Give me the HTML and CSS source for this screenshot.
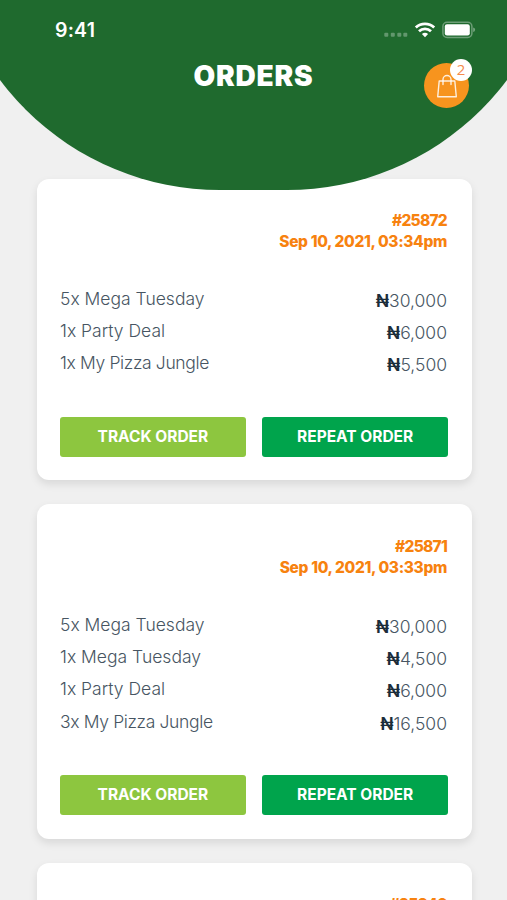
FILE: index.html
```html
<!DOCTYPE html>
<html lang="en">
<head>
<meta charset="utf-8">
<title>Orders</title>
<link rel="stylesheet" href="styles.css">
</head>
<body>
<header class="header">
  <div class="status">
    <span class="time">9:41</span>
    <svg class="status-icons" width="92" height="20" viewBox="0 0 92 20">
      <g fill="#fff" fill-opacity=".3"><rect x="0.3" y="12.8" width="4" height="4" rx="1"/><rect x="6.8" y="12.8" width="4" height="4" rx="1"/><rect x="13.3" y="12.8" width="4" height="4" rx="1"/><rect x="19.3" y="12.8" width="4" height="4" rx="1"/></g>
      <g fill="none" stroke="#fff" stroke-width="2.8"><path d="M31.8 7.4a13.5 13.5 0 0 1 18.4 0"/><path d="M35 11.3a8.8 8.8 0 0 1 12 0"/></g>
      <path d="M41 17.2l-3.1-3.1a4.5 4.5 0 0 1 6.2 0z" fill="#fff"/>
      <rect x="58.9" y="2.2" width="29" height="15.2" rx="4.2" fill="none" stroke="#fff" stroke-opacity=".35" stroke-width="1.5"/>
      <rect x="60.8" y="4.2" width="25" height="11.2" rx="2.2" fill="#fff"/>
      <path d="M89.2 7.6q1.9.5 1.9 2.2t-1.9 2.2z" fill="#fff" fill-opacity=".4"/>
    </svg>
  </div>
  <h1 class="title">ORDERS</h1>
  <div class="cart">
    <svg width="22" height="26" viewBox="0 0 22 26" fill="none" stroke="#fff" stroke-opacity=".85" stroke-width="1.4" stroke-linejoin="round" stroke-linecap="round"><path d="M3.2 8h15.6l1.5 15.7H1.7z"/><path d="M7 11.5V6.5a4 4 0 0 1 8 0v5"/></svg>
    <span class="badge">2</span>
  </div>
</header>
<main class="orders">
  <article class="card">
    <div class="meta"><span class="id">#25872</span><span class="date">Sep 10, 2021, 03:34pm</span></div>
    <ul class="items">
      <li><span>5x Mega Tuesday</span><span class="price"><b>₦</b>30,000</span></li>
      <li><span>1x Party Deal</span><span class="price"><b>₦</b>6,000</span></li>
      <li><span class="tight">1x My Pizza Jungle</span><span class="price"><b>₦</b>5,500</span></li>
    </ul>
    <div class="actions"><button class="btn track">TRACK ORDER</button><button class="btn repeat">REPEAT ORDER</button></div>
  </article>
  <article class="card">
    <div class="meta"><span class="id">#25871</span><span class="date">Sep 10, 2021, 03:33pm</span></div>
    <ul class="items">
      <li><span>5x Mega Tuesday</span><span class="price"><b>₦</b>30,000</span></li>
      <li><span>1x Mega Tuesday</span><span class="price"><b>₦</b>4,500</span></li>
      <li><span>1x Party Deal</span><span class="price"><b>₦</b>6,000</span></li>
      <li><span class="tight">3x My Pizza Jungle</span><span class="price"><b>₦</b>16,500</span></li>
    </ul>
    <div class="actions"><button class="btn track">TRACK ORDER</button><button class="btn repeat">REPEAT ORDER</button></div>
  </article>
  <article class="card">
    <div class="meta"><span class="id">#25840</span></div>
  </article>
</main>
</body>
</html>
```
FILE: styles.css
```css
* { box-sizing: border-box; }
body {
  margin: 0;
  width: 507px;
  height: 900px;
  overflow: hidden;
  background: #f0f0f0;
  font-family: Inter, "Liberation Sans", sans-serif;
  color: #475562;
}
.header {
  position: relative;
  z-index: 1;
  height: 190px;
  margin-bottom: -11.5px;
  overflow: hidden;
  color: #fff;
}
.header::before {
  content: "";
  position: absolute;
  z-index: -1;
  left: -55px;
  bottom: 0;
  width: 617px;
  height: 600px;
  border-radius: 275px;
  background: #1f6a2e;
}
.status {
  display: flex;
  justify-content: space-between;
  align-items: center;
  height: 60px;
  padding: 0 31px 0 55px;
}
.time { font-size: 19.5px; font-weight: 600; letter-spacing: .2px; }
.title {
  margin: 0;
  text-align: center;
  font-size: 28px;
  line-height: 32px;
  font-weight: 900;
  letter-spacing: .8px;
}
.cart {
  position: absolute;
  left: 424px;
  top: 63px;
  display: grid;
  place-items: center;
  width: 45px;
  height: 45px;
  border-radius: 50%;
  background: #f7941e;
}
.badge {
  position: absolute;
  left: 26px;
  top: -4px;
  width: 22px;
  height: 22px;
  border-radius: 50%;
  background: #fff;
  color: #f58a4b;
  font: 400 15px/21px "Open Sans", sans-serif;
  text-align: center;
}
.orders {
  display: flex;
  flex-direction: column;
  gap: 24px;
  padding: 0 35.5px 0 36.5px;
}
.card {
  padding: 31.3px 23.5px 23.8px;
  border-radius: 12px;
  background: #fff;
  box-shadow: 0 4px 9px rgba(0, 0, 0, .1);
}
.meta {
  display: flex;
  flex-direction: column;
  align-items: flex-end;
  padding-right: 1px;
  color: #f7820f;
  font-size: 15.5px;
  line-height: 21.5px;
  font-weight: 800;
  letter-spacing: -.35px;
}
.id { letter-spacing: -.75px; }
.items {
  margin: 30px 0 37px;
  padding: 0;
  list-style: none;
  font-size: 17.5px;
  font-weight: 300;
  line-height: 32.3px;
}
.items li {
  display: flex;
  justify-content: space-between;
  height: 32.3px;
}
.tight { letter-spacing: -.36px; }
.price { padding: 2px 1px 0 0; }
.price b { font-weight: 600; color: #1b2d3a; }
.actions {
  display: grid;
  grid-template-columns: 1fr 1fr;
  gap: 16.5px;
}
.btn {
  height: 40px;
  padding: 0;
  border: 0;
  border-radius: 3px;
  color: #fff;
  font: 700 15.5px Inter, "Liberation Sans", sans-serif;
}
.track { background: #8dc63f; }
.repeat { background: #00a44c; }
```
